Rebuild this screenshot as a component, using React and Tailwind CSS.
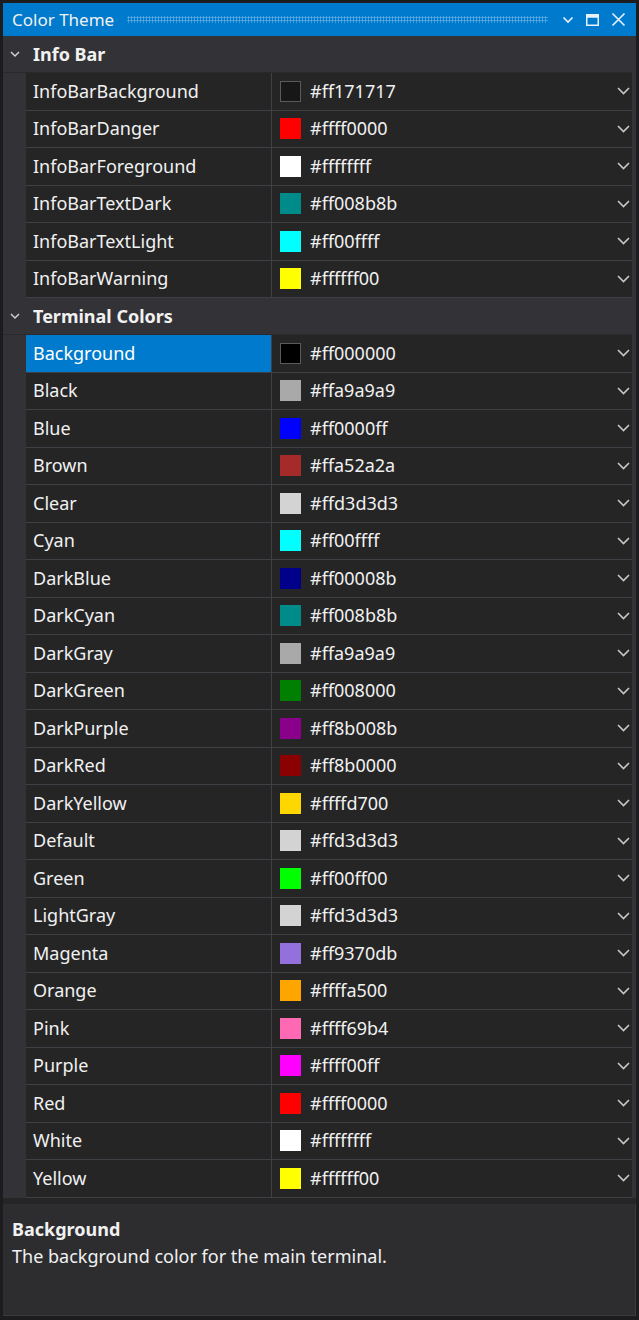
import React from "react";

const infoBar = [
  ["InfoBarBackground", "#ff171717", "#171717", true],
  ["InfoBarDanger", "#ffff0000", "#ff0000"],
  ["InfoBarForeground", "#ffffffff", "#ffffff"],
  ["InfoBarTextDark", "#ff008b8b", "#008b8b"],
  ["InfoBarTextLight", "#ff00ffff", "#00ffff"],
  ["InfoBarWarning", "#ffffff00", "#ffff00"],
];

const terminal = [
  ["Background", "#ff000000", "#000000", true],
  ["Black", "#ffa9a9a9", "#a9a9a9"],
  ["Blue", "#ff0000ff", "#0000ff"],
  ["Brown", "#ffa52a2a", "#a52a2a"],
  ["Clear", "#ffd3d3d3", "#d3d3d3"],
  ["Cyan", "#ff00ffff", "#00ffff"],
  ["DarkBlue", "#ff00008b", "#00008b"],
  ["DarkCyan", "#ff008b8b", "#008b8b"],
  ["DarkGray", "#ffa9a9a9", "#a9a9a9"],
  ["DarkGreen", "#ff008000", "#008000"],
  ["DarkPurple", "#ff8b008b", "#8b008b"],
  ["DarkRed", "#ff8b0000", "#8b0000"],
  ["DarkYellow", "#ffffd700", "#ffd700"],
  ["Default", "#ffd3d3d3", "#d3d3d3"],
  ["Green", "#ff00ff00", "#00ff00"],
  ["LightGray", "#ffd3d3d3", "#d3d3d3"],
  ["Magenta", "#ff9370db", "#9370db"],
  ["Orange", "#ffffa500", "#ffa500"],
  ["Pink", "#ffff69b4", "#ff69b4"],
  ["Purple", "#ffff00ff", "#ff00ff"],
  ["Red", "#ffff0000", "#ff0000"],
  ["White", "#ffffffff", "#ffffff"],
  ["Yellow", "#ffffff00", "#ffff00"],
];

function Chevron() {
  return (
    <svg width="13" height="8" viewBox="0 0 13 8">
      <polyline points="1,1 6.5,6.5 12,1" fill="none" stroke="#c8c8c8" strokeWidth="1.6" />
    </svg>
  );
}

function Category({ title }) {
  return (
    <div className="flex h-[37px] items-center bg-[#333337] border-b border-[#2a2a2d]">
      <div className="w-[23px] flex items-center justify-center pl-[1px]">
        <svg width="10" height="7" viewBox="0 0 10 7">
          <polyline points="1,1 5,5 9,1" fill="none" stroke="#d0d0d0" strokeWidth="1.5" />
        </svg>
      </div>
      <div className="pl-[7px] font-bold text-[18px] text-[#f1f1f1]">{title}</div>
    </div>
  );
}

function Row({ name, value, color, selected, darkSwatch }) {
  return (
    <div className="flex h-[37.5px] bg-[#333337]">
      <div className="w-[23px] shrink-0" />
      <div
        className={
          "w-[245px] shrink-0 flex items-center pl-[7px] text-[18px] border-b " +
          (selected
            ? "bg-[#007acc] text-[#ffffff] border-[#3f3f46]"
            : "bg-[#252526] text-[#f1f1f1] border-[#3f3f46]")
        }
      >
        {name}
      </div>
      <div className="w-[1px] shrink-0 bg-[#3f3f46]" />
      <div className="w-[2px] shrink-0 bg-[#252526] border-b border-[#3f3f46]" />
      <div className="flex-1 flex items-center bg-[#252526] border-b border-[#3f3f46] pl-[6px] pr-[2px]">
        <div
          className={
            "w-[21px] h-[21px] shrink-0 " +
            (darkSwatch ? "border border-[#5a5a5a]" : "")
          }
          style={{ backgroundColor: color }}
        />
        <div className="pl-[9px] text-[18px] text-[#f1f1f1] flex-1">{value}</div>
        <Chevron />
      </div>
    </div>
  );
}

export default function App() {
  return (
    <div
      className="w-[639px] h-[1320px] bg-[#1c1c1e] pt-[3px] pl-[3px] pr-[3px] pb-[4px] flex flex-col overflow-hidden"
      style={{ fontFamily: '"Noto Sans", "Open Sans", sans-serif' }}
    >
      <div className="h-[33px] shrink-0 bg-[#007acc] flex items-center pl-[9px] pr-[10px]">
        <div className="text-[17px] text-[#f1f1f1] leading-none">Color Theme</div>
        <div className="flex-1 ml-[13px] mr-[14px] h-[7px] bg-[radial-gradient(circle,#6db4e8_0.9px,transparent_1.2px)] [background-size:3px_3px] opacity-90" />
        <div className="flex items-center gap-[12px]">
          <svg width="12" height="8" viewBox="0 0 12 8">
            <polyline points="1.5,1.5 6,6 10.5,1.5" fill="none" stroke="#eaf3fb" strokeWidth="1.6" />
          </svg>
          <svg width="13" height="12" viewBox="0 0 13 12">
            <rect x="0.75" y="0.75" width="11.5" height="10.5" fill="none" stroke="#eaf3fb" strokeWidth="1.5" />
            <rect x="0.75" y="0.75" width="11.5" height="3" fill="#eaf3fb" />
          </svg>
          <svg width="15" height="15" viewBox="0 0 15 15">
            <path d="M1.5 1.5 L13.5 13.5 M13.5 1.5 L1.5 13.5" stroke="#eaf3fb" strokeWidth="1.6" />
          </svg>
        </div>
      </div>
      <div className="shrink-0 bg-[#333337] pr-[4px]">
        <Category title="Info Bar" />
        {infoBar.map(([n, v, c, d]) => (
          <Row key={n} name={n} value={v} color={c} darkSwatch={d} />
        ))}
        <Category title="Terminal Colors" />
        {terminal.map(([n, v, c, d]) => (
          <Row key={n} name={n} value={v} color={c} darkSwatch={d} selected={n === "Background"} />
        ))}
      </div>
      <div className="h-[6px] shrink-0 bg-[#252526]" />
      <div className="flex-1 bg-[#2d2d30] pl-[9px] pt-[12px] border-b border-r border-[#3a3a3d]">
        <div className="font-bold text-[18px] text-[#f1f1f1] leading-[26px]">Background</div>
        <div className="text-[18px] text-[#f1f1f1] leading-[28px]">The background color for the main terminal.</div>
      </div>
    </div>
  );
}
